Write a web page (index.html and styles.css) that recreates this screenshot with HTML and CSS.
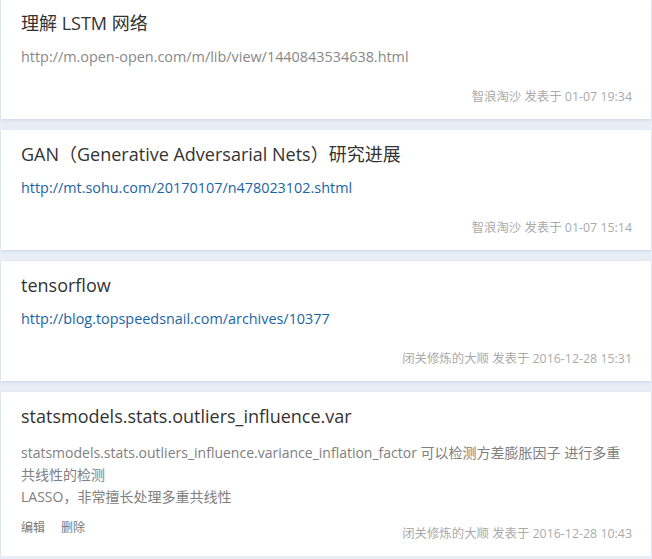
FILE: index.html
```html
<!DOCTYPE html>
<html lang="zh-CN">
<head>
<meta charset="utf-8">
<title>Notes</title>
<link rel="stylesheet" href="styles.css">
</head>
<body>
<div class="list">
  <div class="card">
    <div class="title">理解 LSTM 网络</div>
    <div class="url plain">http://m.open-open.com/m/lib/view/1440843534638.html</div>
    <div class="foot"><span class="meta">智浪淘沙 发表于 01-07 19:34</span></div>
  </div>
  <div class="card">
    <div class="title">GAN（Generative Adversarial Nets）研究进展</div>
    <div class="url"><a href="#">http://mt.sohu.com/20170107/n478023102.shtml</a></div>
    <div class="foot"><span class="meta">智浪淘沙 发表于 01-07 15:14</span></div>
  </div>
  <div class="card">
    <div class="title">tensorflow</div>
    <div class="url"><a href="#">http://blog.topspeedsnail.com/archives/10377</a></div>
    <div class="foot"><span class="meta">闭关修炼的大顺 发表于 2016-12-28 15:31</span></div>
  </div>
  <div class="card">
    <div class="title">statsmodels.stats.outliers_influence.var</div>
    <div class="desc">statsmodels.stats.outliers_influence.variance_inflation_factor 可以检测方差膨胀因子 进行多重共线性的检测<br>LASSO，非常擅长处理多重共线性</div>
    <div class="foot desc-foot">
      <div class="actions"><a href="#">编辑</a><a href="#">删除</a></div>
      <span class="meta">闭关修炼的大顺 发表于 2016-12-28 10:43</span>
    </div>
  </div>
</div>
</body>
</html>
```

FILE: styles.css
```css
html, body {
  margin: 0;
  padding: 0;
  background: #e9eef6;
  font-family: "Open Sans", "Noto Sans CJK SC", sans-serif;
}
.list {
  display: flex;
  flex-direction: column;
  gap: 11px;
  padding: 0 1px;
  margin-top: -1px;
}
.card {
  background: #fff;
  box-shadow: 0 1px 3px rgba(150, 170, 200, 0.35);
  padding: 10px 20px 13px 20px;
}
.title {
  font-size: 18px;
  line-height: 28px;
  color: #333;
}
.url {
  margin-top: 10px;
  font-size: 14.4px;
  line-height: 20px;
}
.url.plain {
  color: #888;
}
.url a {
  color: #1a64a6;
  text-decoration: none;
}
.foot {
  display: flex;
  justify-content: flex-end;
  margin-top: 21px;
}
.meta {
  font-size: 12.4px;
  line-height: 18px;
  color: #aaa;
  margin-right: -1px;
}
.desc {
  margin-top: 12px;
  font-size: 14px;
  line-height: 22px;
  color: #808080;
}
.desc-foot {
  margin-top: 17px;
  justify-content: space-between;
}
.actions {
  display: flex;
  gap: 16px;
  margin-top: -6px;
}
.actions a {
  font-size: 12px;
  line-height: 18px;
  color: #777;
  text-decoration: none;
}
```
